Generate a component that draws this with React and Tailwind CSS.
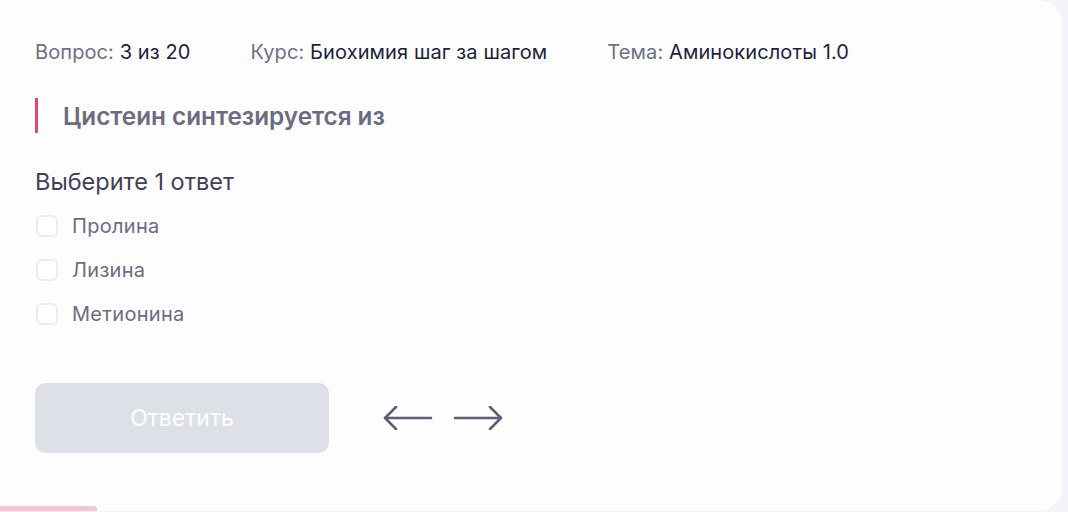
import React from 'react';

const options = ['Пролина', 'Лизина', 'Метионина'];

function Arrow({ dir }) {
    // long thin arrow, drawn left or right
    const d = dir === 'left' ? 'M2 12 H48 M13 1 L2 12 L13 23' : 'M2 12 H48 M37 1 L48 12 L37 23';
    return (
        <svg width="50" height="24" viewBox="0 0 50 24" fill="none">
            <path d={d} stroke="#5c5f77" strokeWidth="2.6" strokeLinecap="round" strokeLinejoin="round" />
        </svg>
    );
}

export default function App() {
    return (
        <div className="h-[512px] w-[1068px] overflow-hidden bg-[#f4f4fa]" style={{ fontFamily: 'Inter, "Noto Sans", sans-serif' }}>
            <div className="flex h-[511px] w-[1062px] flex-col rounded-r-[24px] bg-[#fdfdfe]">
                <div className="flex flex-col px-[35px] pt-[40px]">
                    <div className="flex gap-[60px] text-[20px] leading-[24px] tracking-[0.1px]">
                        <span><span className="text-[#6e7083]">Вопрос: </span><span className="text-[#1e1f3b]">3 из 20</span></span>
                        <span><span className="text-[#6e7083]">Курс: </span><span className="text-[#1e1f3b]">Биохимия шаг за шагом</span></span>
                        <span><span className="text-[#6e7083]">Тема: </span><span className="text-[#1e1f3b]">Аминокислоты 1.0</span></span>
                    </div>

                    <div className="mt-[34px] flex h-[35px] items-center border-l-[3px] border-[#e0486e] pl-[25px]">
                        <h2 className="text-[24.3px] leading-[30px] font-semibold text-[#6b6c7f]">Цистеин синтезируется из</h2>
                    </div>

                    <p className="mt-[35px] text-[23.5px] leading-[28px] text-[#3f4159]">Выберите 1 ответ</p>

                    <div className="mt-[8px] flex flex-col">
                        {options.map((opt) => (
                            <label key={opt} className="flex h-[44px] items-center gap-[14px]">
                                <span className="ml-px h-[22px] w-[22px] rounded-[6px] border-2 border-[#ececf0] bg-white"></span>
                                <span className="text-[20px] leading-[24px] tracking-[0.3px] text-[#6b6c7f]">{opt}</span>
                            </label>
                        ))}
                    </div>

                    <div className="mt-[47px] flex items-center gap-[54px]">
                        <button className="h-[70px] w-[294px] rounded-[10px] bg-[#dde1e7] text-[23px] text-white">
                            Ответить
                        </button>
                        <div className="flex items-center gap-[20px]">
                            <Arrow dir="left" />
                            <Arrow dir="right" />
                        </div>
                    </div>
                </div>
                <div className="mt-auto h-[5px] w-[97px] rounded-tr-[4px] bg-[#f5c6cf]"></div>
            </div>
        </div>
    );
}
